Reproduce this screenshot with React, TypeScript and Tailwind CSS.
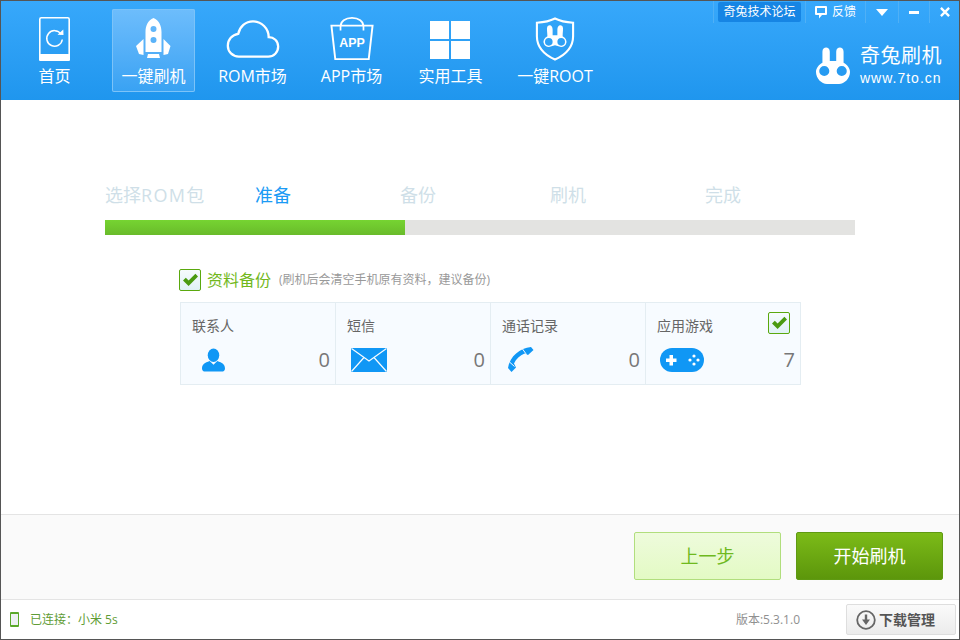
import React from "react";

const Check = ({ className }: { className: string }) => (
  <span className={"flex items-center justify-center rounded-[2px] border border-[#5aa80e] bg-gradient-to-b from-[#f6fbfd] to-[#dff1f5] w-[22px] h-[22px] " + className}>
    <svg width="17" height="14" viewBox="0 0 17 14"><path d="M1 7.5 L3.8 4.800 L6.600 7.600 L13.400 0.800 L16 3.400 L6.600 13 Z" fill="#4a9a10" /></svg>
  </span>
);

const HomeIcon = () => (
  <svg width="31" height="44" viewBox="0 0 31 44" fill="none">
    <rect x="0.800" y="0.800" width="29.400" height="42.400" rx="1.500" stroke="white" strokeWidth="1.600" />
    <rect x="0" y="37" width="31" height="7" rx="1.500" fill="white" />
    <path d="M22 17 A7.800 7.800 0 1 0 23.300 22.500" stroke="white" strokeWidth="1.500" />
    <path d="M18.500 17.800 L24.500 18 L24.300 12.500 Z" fill="white" />
  </svg>
);

const RocketIcon = () => (
  <svg width="36" height="42" viewBox="0 0 36 42">
    <path fillRule="evenodd" fill="white" d="M17.500 0 C23 2 25.500 8 25.500 14 L25.500 34 L9.500 34 L9.500 14 C9.500 8 12 2 17.500 0 Z M17.500 8 A3 3 0 1 0 17.500 14 A3 3 0 1 0 17.500 8 Z M17.500 19 A3 3 0 1 0 17.500 25 A3 3 0 1 0 17.500 19 Z" />
    <path fill="white" d="M7.500 21 L7.500 37 L3 36 L0 28 Z M27.500 21 L27.500 37 L32 36 L34.500 28 Z M12 36 L23 36 L24 40 L11 40 Z" />
  </svg>
);

const CloudIcon = () => (
  <svg width="54" height="38" viewBox="0 0 56 40" fill="none">
    <path d="M13 38.500 H44 C50 38.500 54.500 34 54.500 28 C54.500 22 50 18 44.500 18 C44.500 9 37 1.500 28 1.500 C20 1.500 14 7 12.500 14.500 C6 15.500 1.500 20.500 1.500 27 C1.500 33.500 6.500 38.500 13 38.500 Z" stroke="white" strokeWidth="2.400" />
  </svg>
);

const BagIcon = () => (
  <svg width="44" height="44" viewBox="0 0 46 46" fill="none">
    <path d="M1.500 9 H44.500 L40.500 44 H5.500 Z" stroke="white" strokeWidth="2" />
    <path d="M11 14 V10 C11 4.500 16 1 23 1 C30 1 35 4.500 35 10 V14" stroke="white" strokeWidth="1.800" />
    <text x="23" y="31" fill="white" fontSize="13" fontWeight="700" textAnchor="middle" fontFamily="'Liberation Sans', sans-serif">APP</text>
  </svg>
);

const WindowsIcon = () => (
  <div className="grid grid-cols-[19px_19px] grid-rows-[18px_18px] gap-[2px] mt-[2px] -ml-[1px]">
    <span className="bg-white" /><span className="bg-white" /><span className="bg-white" /><span className="bg-white" />
  </div>
);

const ShieldIcon = () => (
  <svg width="40" height="44" viewBox="0 0 42 46" fill="none" className="-ml-[1px]">
    <path d="M21 1.500 C27 4.500 33 5.500 40 6 V20 C40 31 32 39.500 21 44.500 C10 39.500 2 31 2 20 V6 C9 5.500 15 4.500 21 1.500 Z" stroke="white" strokeWidth="2.200" />
    <path fillRule="evenodd" fill="white" d="M13 10 C15.500 7 18.500 9 18.500 13 V19 H23.500 V13 C23.500 9 26.500 7 29 10 C30 12 29 16 29 20 C32.500 22 33.500 25 33 27 C32 31 28 32 25.500 31 L21 29.500 L16.500 31 C14 32 10 31 9 27 C8.500 25 9.500 22 13 20 C13 16 12 12 13 10 Z M14.500 22 A4 4 0 1 0 14.500 30 A4 4 0 1 0 14.500 22 Z M27.500 22 A4 4 0 1 0 27.500 30 A4 4 0 1 0 27.500 22 Z" />
  </svg>
);

const nav: { label: string; icon: React.ReactNode; active?: boolean }[] = [
  { label: "首页", icon: <HomeIcon /> },
  { label: "一键刷机", icon: <RocketIcon />, active: true },
  { label: "ROM市场", icon: <CloudIcon /> },
  { label: "APP市场", icon: <BagIcon /> },
  { label: "实用工具", icon: <WindowsIcon /> },
  { label: "一键ROOT", icon: <ShieldIcon /> },
];

const Stat = ({ label, icon, value, check, last, pad }: { label: string; icon: React.ReactNode; value: string; check?: boolean; last?: boolean; pad: string }) => (
  <div className={"relative flex flex-col pt-[14px] " + (last ? "flex-1" : "w-[155px] shrink-0 border-r border-[#e4edf2]")}>
    <div className="pl-[11px] text-[14px] leading-[18px] text-[#666]">{label}</div>
    <div className="flex items-center justify-between pr-[5px] mt-[12px] h-[26px]">
      <div className={"flex items-center " + pad}>{icon}</div>
      <span className="text-[20px] text-[#777] leading-none">{value}</span>
    </div>
    {check && <Check className="absolute right-[10px] top-[9px]" />}
  </div>
);

export default function App() {
  return (
    <div className="w-[960px] h-[640px] border border-[#555] flex flex-col bg-white overflow-hidden font-['Open_Sans','Noto_Sans_CJK_SC',sans-serif]">
      {/* header */}
      <header className="h-[99px] shrink-0 flex justify-between bg-gradient-to-b from-[#37a8fb] to-[#1f96ee] text-white">
        <nav className="flex gap-[16px] pl-[12px] pt-[8px]">
          {nav.map((n) => (
            <div
              key={n.label}
              className={
                "h-[83px] flex flex-col items-center rounded-[2px] " +
                (n.label === "一键ROOT" ? "w-[94px] " : "w-[83px] ") +
                (n.active ? "bg-gradient-to-b from-[#6dbdfc] to-[#38a2f3] shadow-[inset_0_0_0_1px_#7cc3f8]" : "")
              }
            >
              <div className="h-[50px] mt-[5px] flex items-center justify-center">{n.icon}</div>
              <div className="text-[16px] leading-[22px] mt-[1px] whitespace-nowrap">{n.label}</div>
            </div>
          ))}
        </nav>
        <div className="flex flex-col items-end">
          <div className="flex h-[22px] text-[12px] items-stretch">
            <div className="flex items-center px-[4px] border-l border-[#4fb0f6] w-[92px]">
              <span className="bg-[#1685e4] rounded-[2px] w-[84px] text-center h-[20px] leading-[20px] whitespace-nowrap">奇兔技术论坛</span>
            </div>
            <div className="flex items-center gap-[5px] w-[60px] pl-[9px] border-l border-[#4fb0f6]">
              <svg width="12" height="13" viewBox="0 0 12 13"><path fillRule="evenodd" fill="white" d="M1 0 H11 A1 1 0 0 1 12 1 V8 A1 1 0 0 1 11 9 H7 L4 12.500 V9 H1 A1 1 0 0 1 0 8 V1 A1 1 0 0 1 1 0 Z M2 2 V7 H10 V2 Z" /></svg>
              <span>反馈</span>
            </div>
            <div className="flex items-center justify-center w-[33px] border-l border-[#4fb0f6]">
              <svg width="12" height="7" viewBox="0 0 12 7"><path d="M0 0 H12 L6 7 Z" fill="white" /></svg>
            </div>
            <div className="flex items-center justify-center w-[31px] border-l border-[#4fb0f6]">
              <span className="w-[10px] h-[3px] bg-white" />
            </div>
            <div className="flex items-center justify-center w-[30px] border-l border-[#4fb0f6]">
              <svg width="10" height="10" viewBox="0 0 11 11"><path d="M1 1 L10 10 M10 1 L1 10" stroke="white" strokeWidth="2.600" /></svg>
            </div>
          </div>
          <div className="flex items-center gap-[10px] pr-[17px] pt-[21px]">
            <svg width="34" height="39" viewBox="0 0 37 40">
              <path fillRule="evenodd" fill="white" d="M7 5 C7 -1 15 -1 15 5 V15 H22 V5 C22 -1 30 -1 30 5 V17 C34 19 37 23 37 27 C37 34 31 40 25 40 H12 C6 40 0 34 0 27 C0 23 3 19 7 17 Z M9 20.500 A5.500 5.500 0 1 0 9 31.500 A5.500 5.500 0 1 0 9 20.500 Z M28 20.500 A5.500 5.500 0 1 0 28 31.500 A5.500 5.500 0 1 0 28 20.500 Z" />
            </svg>
            <div className="flex flex-col items-start">
              <span className="text-[20px] leading-[24px] tracking-[0.5px]">奇兔刷机</span>
              <span className="text-[14px] leading-[18px] mt-[1px] tracking-[1px] font-['Liberation_Sans',sans-serif]">www.7to.cn</span>
            </div>
          </div>
        </div>
      </header>

      {/* main */}
      <main className="flex-1 flex flex-col pl-[104px] pt-[81px]">
        <div className="flex text-[18px] leading-[28px] text-[#cfdfe8] h-[28px]">
          <span className="w-[150px] whitespace-nowrap">选择<span className="tracking-[1.300px]">ROM</span>包</span>
          <span className="w-[145px] text-[#1b9bf5]">准备</span>
          <span className="w-[150px]">备份</span>
          <span className="w-[155px]">刷机</span>
          <span>完成</span>
        </div>
        <div className="mt-[11px] w-[750px] h-[15px] bg-[#e3e3e1]">
          <div className="h-full w-[300px] bg-gradient-to-b from-[#76d432] to-[#69bb2a]" />
        </div>

        <div className="mt-[34px] ml-[74px] flex items-center h-[22px]">
          <Check className="" />
          <span className="ml-[6px] text-[16px] leading-[20px] text-[#72b81c]">资料备份</span>
          <span className="ml-[8px] text-[12px] leading-[18px] text-[#999] whitespace-nowrap">(刷机后会清空手机原有资料，建议备份)</span>
        </div>

        <div className="mt-[11px] ml-[75px] w-[621px] h-[83px] flex border border-[#e4edf2] bg-[#f7fbff]">
          <Stat
            label="联系人"
            value="0"
            pad="pl-[21px]"
            icon={
              <svg width="23" height="24" viewBox="0 0 24 24" fill="#1097f5">
                <ellipse cx="12" cy="7" rx="6" ry="7" />
                <path d="M0 21 C0 16 3 15 8 13 L12 17 L16 13 C21 15 24 16 24 21 C24 23 22 24 21 24 H3 C2 24 0 23 0 21 Z" />
              </svg>
            }
          />
          <Stat
            label="短信"
            value="0"
            pad="pl-[15px]"
            icon={
              <svg width="36" height="24" viewBox="0 0 36 24">
                <rect width="36" height="24" fill="#1097f5" />
                <path d="M0.500 0.500 L18 13 L35.500 0.500 M0.500 23.500 L13 9.500 M35.500 23.500 L23 9.500" stroke="#f7fbff" strokeWidth="1.200" fill="none" />
              </svg>
            }
          />
          <Stat
            label="通话记录"
            value="0"
            pad="pl-[17px]"
            icon={
              <svg width="26" height="26" viewBox="0 0 26 26" fill="#1097f5">
                <path d="M23 0 C12 1 2 9 0 21 L3.500 25 L8 20.500 L6 16.500 C8 12 12 8.500 16.500 6.500 L20 8 L25.500 3 Z" />
                <path d="M14.500 2 L18.500 7.500 M1.500 15 L6.500 19.500" stroke="#f7fbff" strokeWidth="1" />
              </svg>
            }
          />
          <Stat
            last
            check
            label="应用游戏"
            value="7"
            pad="pl-[14px]"
            icon={
              <svg width="44" height="24" viewBox="0 0 44 24">
                <rect width="44" height="24" rx="12" fill="#1097f5" />
                <path d="M9.500 7 H13 V10.500 H16.500 V14 H13 V17.500 H9.500 V14 H6 V10.500 H9.500 Z" fill="white" />
                <circle cx="34" cy="8" r="1.600" fill="white" /><circle cx="34" cy="16" r="1.600" fill="white" />
                <circle cx="30" cy="12" r="1.600" fill="white" /><circle cx="38" cy="12" r="1.600" fill="white" />
              </svg>
            }
          />
        </div>
      </main>

      {/* action bar */}
      <div className="h-[85px] shrink-0 border-t border-[#e4e4e4] bg-[#fafafa] flex justify-end items-start gap-[15px] pt-[17px] pr-[16px]">
        <button className="w-[147px] h-[48px] rounded-[2px] border border-[#b1de7d] bg-gradient-to-b from-[#eefbdc] to-[#e3fac4] text-[#6fb91e] text-[18px]">上一步</button>
        <button className="w-[147px] h-[48px] rounded-[2px] border border-[#5f9a12] bg-gradient-to-b from-[#7cbb18] to-[#5c960b] text-white text-[18px]">开始刷机</button>
      </div>

      {/* status bar */}
      <footer className="h-[40px] shrink-0 border-t border-[#e4e4e4] bg-white flex items-center justify-between text-[12px]">
        <div className="flex items-center pl-[9px] text-[#5f9c36]">
          <span className="w-[9px] h-[15px] border-[1.5px] border-[#5aa82a] border-y-[2.500px] rounded-[1px] bg-[#edf1f3]" />
          <span className="ml-[11px] whitespace-nowrap">已连接：小米 5s</span>
        </div>
        <div className="flex items-center pr-[3px]">
          <span className="text-[#909090] text-[12px] mr-[46px]">版本:5.3.1.0</span>
          <div className="w-[110px] h-[31px] flex items-center pl-[9px] gap-[3px] rounded-[2px] border border-[#dedede] bg-gradient-to-b from-[#fafafa] to-[#ececec] text-[#555] text-[14px] font-bold">
            <svg width="20" height="20" viewBox="0 0 20 20" fill="none">
              <circle cx="10" cy="10" r="8.800" stroke="#666" strokeWidth="1.800" />
              <path d="M8.800 4.500 H11.200 V9.500 H14 L10 15 L6 9.500 H8.800 Z" fill="#666" />
            </svg>
            <span>下载管理</span>
          </div>
        </div>
      </footer>
    </div>
  );
}
